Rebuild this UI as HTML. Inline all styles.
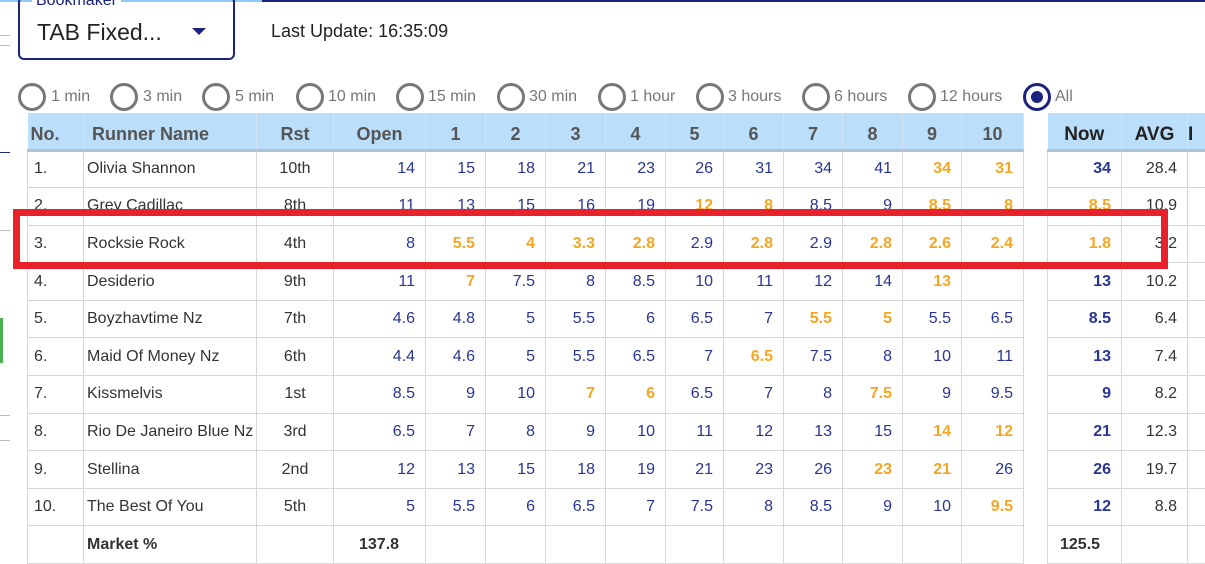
<!DOCTYPE html>
<html><head><meta charset="utf-8"><style>
*{margin:0;padding:0;box-sizing:border-box}
body{width:1205px;height:544px;overflow:hidden;background:#fff;font-family:"Liberation Sans",sans-serif;position:relative}
.topl{position:absolute;left:0;top:0;width:262px;height:2px;background:#90caf9}
.topd{position:absolute;left:262px;top:0;width:943px;height:2px;background:#1a237e}
.side{position:absolute;left:0;width:10px;height:1px;background:#bbb}
.bm{position:absolute;left:18px;top:-4px;width:217px;height:64px;border:2.5px solid #1a237e;border-radius:6px}
.bml{position:absolute;left:32px;top:-8px;background:#fff;padding:0 4px;color:#1a237e;font-size:16px}
.bmt{position:absolute;left:37px;top:19px;font-size:23px;color:#222}
.arr{position:absolute;left:192px;top:28px;width:0;height:0;border-left:7px solid transparent;border-right:7px solid transparent;border-top:7px solid #1a237e}
.lu{position:absolute;left:271px;top:21px;font-size:18px;color:#222}
.r{position:absolute;top:83px;width:28px;height:28px;border:3px solid #777;border-radius:50%}
.r.on{border-color:#1a237e}
.r.on::after{content:"";position:absolute;left:5px;top:5px;width:12px;height:12px;border-radius:50%;background:#1a237e}
.rl{position:absolute;top:88px;font-size:16px;color:#777}
table{position:absolute;border-collapse:collapse;table-layout:fixed;font-size:16px}
th{background:#bbdefb;height:37px;padding-top:8px;font-size:18px;color:#555;font-weight:bold;border-right:1px solid #d4e6f5;border-bottom:3px solid #b0c4d6;text-align:center}
td{height:37.6px;border:1px solid #d8d8d8;color:#333;padding:0 10px 0 0;text-align:right;white-space:nowrap}
td.n{text-align:left;padding-left:6px}
td.nm{text-align:left;padding-left:3px}
td.c{text-align:center;padding:0}
td.v{color:#283593}
td.o{color:#f5a623;font-weight:bold}
td.b{color:#283593;font-weight:bold}
.box{position:absolute;left:13px;top:209px;width:1155px;height:60px;border:7px solid #e8212a}
</style></head><body>
<div class="topl"></div><div class="topd"></div>
<div class="side" style="top:35px"></div><div class="side" style="top:45px"></div><div class="side" style="top:152px;background:#1a237e"></div><div class="side" style="top:230px"></div><div class="side" style="top:415px"></div><div class="side" style="top:440px"></div>
<div style="position:absolute;left:0;top:318px;width:3px;height:45px;background:#4caf50"></div>
<div class="bm"></div><div class="bml">Bookmaker</div><div class="bmt">TAB Fixed...</div><div class="arr"></div>
<div class="lu">Last Update: 16:35:09</div>

<div class="r" style="left:18px"></div><div class="rl" style="left:51px">1 min</div>
<div class="r" style="left:110px"></div><div class="rl" style="left:143px">3 min</div>
<div class="r" style="left:202px"></div><div class="rl" style="left:235px">5 min</div>
<div class="r" style="left:296px"></div><div class="rl" style="left:328px">10 min</div>
<div class="r" style="left:396px"></div><div class="rl" style="left:428px">15 min</div>
<div class="r" style="left:497px"></div><div class="rl" style="left:529px">30 min</div>
<div class="r" style="left:598px"></div><div class="rl" style="left:630px">1 hour</div>
<div class="r" style="left:696px"></div><div class="rl" style="left:728px">3 hours</div>
<div class="r" style="left:802px"></div><div class="rl" style="left:834px">6 hours</div>
<div class="r" style="left:908px"></div><div class="rl" style="left:940px">12 hours</div>
<div class="r on" style="left:1023px"></div><div class="rl" style="left:1055px">All</div>

<table style="left:27px;top:113px;width:996px">
<colgroup><col style="width:56px"><col style="width:173px"><col style="width:77px"><col style="width:92px"><col style="width:60px"><col style="width:60px"><col style="width:60px"><col style="width:60px"><col style="width:58px"><col style="width:60px"><col style="width:59px"><col style="width:60px"><col style="width:59px"><col style="width:62px"></colgroup>
<tr><th style="text-align:left;padding-left:3px">No.</th><th style="text-align:left;padding-left:8px">Runner Name</th><th>Rst</th><th>Open</th><th>1</th><th>2</th><th>3</th><th>4</th><th>5</th><th>6</th><th>7</th><th>8</th><th>9</th><th>10</th></tr>
<tr><td class="n">1.</td><td class="nm">Olivia Shannon</td><td class="c">10th</td><td class="v">14</td><td class="v">15</td><td class="v">18</td><td class="v">21</td><td class="v">23</td><td class="v">26</td><td class="v">31</td><td class="v">34</td><td class="v">41</td><td class="o">34</td><td class="o">31</td></tr>
<tr><td class="n">2.</td><td class="nm">Grey Cadillac</td><td class="c">8th</td><td class="v">11</td><td class="v">13</td><td class="v">15</td><td class="v">16</td><td class="v">19</td><td class="o">12</td><td class="o">8</td><td class="v">8.5</td><td class="v">9</td><td class="o">8.5</td><td class="o">8</td></tr>
<tr><td class="n">3.</td><td class="nm">Rocksie Rock</td><td class="c">4th</td><td class="v">8</td><td class="o">5.5</td><td class="o">4</td><td class="o">3.3</td><td class="o">2.8</td><td class="v">2.9</td><td class="o">2.8</td><td class="v">2.9</td><td class="o">2.8</td><td class="o">2.6</td><td class="o">2.4</td></tr>
<tr><td class="n">4.</td><td class="nm">Desiderio</td><td class="c">9th</td><td class="v">11</td><td class="o">7</td><td class="v">7.5</td><td class="v">8</td><td class="v">8.5</td><td class="v">10</td><td class="v">11</td><td class="v">12</td><td class="v">14</td><td class="o">13</td><td></td></tr>
<tr><td class="n">5.</td><td class="nm">Boyzhavtime Nz</td><td class="c">7th</td><td class="v">4.6</td><td class="v">4.8</td><td class="v">5</td><td class="v">5.5</td><td class="v">6</td><td class="v">6.5</td><td class="v">7</td><td class="o">5.5</td><td class="o">5</td><td class="v">5.5</td><td class="v">6.5</td></tr>
<tr><td class="n">6.</td><td class="nm">Maid Of Money Nz</td><td class="c">6th</td><td class="v">4.4</td><td class="v">4.6</td><td class="v">5</td><td class="v">5.5</td><td class="v">6.5</td><td class="v">7</td><td class="o">6.5</td><td class="v">7.5</td><td class="v">8</td><td class="v">10</td><td class="v">11</td></tr>
<tr><td class="n">7.</td><td class="nm">Kissmelvis</td><td class="c">1st</td><td class="v">8.5</td><td class="v">9</td><td class="v">10</td><td class="o">7</td><td class="o">6</td><td class="v">6.5</td><td class="v">7</td><td class="v">8</td><td class="o">7.5</td><td class="v">9</td><td class="v">9.5</td></tr>
<tr><td class="n">8.</td><td class="nm">Rio De Janeiro Blue Nz</td><td class="c">3rd</td><td class="v">6.5</td><td class="v">7</td><td class="v">8</td><td class="v">9</td><td class="v">10</td><td class="v">11</td><td class="v">12</td><td class="v">13</td><td class="v">15</td><td class="o">14</td><td class="o">12</td></tr>
<tr><td class="n">9.</td><td class="nm">Stellina</td><td class="c">2nd</td><td class="v">12</td><td class="v">13</td><td class="v">15</td><td class="v">18</td><td class="v">19</td><td class="v">21</td><td class="v">23</td><td class="v">26</td><td class="o">23</td><td class="o">21</td><td class="v">26</td></tr>
<tr><td class="n">10.</td><td class="nm">The Best Of You</td><td class="c">5th</td><td class="v">5</td><td class="v">5.5</td><td class="v">6</td><td class="v">6.5</td><td class="v">7</td><td class="v">7.5</td><td class="v">8</td><td class="v">8.5</td><td class="v">9</td><td class="v">10</td><td class="o">9.5</td></tr>
<tr><td></td><td class="nm" style="font-weight:bold;padding-left:3px">Market %</td><td></td><td style="font-weight:bold;text-align:left;padding-left:25px">137.8</td><td></td><td></td><td></td><td></td><td></td><td></td><td></td><td></td><td></td><td></td></tr>
</table>

<table style="left:1047px;top:113px;width:170px">
<colgroup><col style="width:74px"><col style="width:66px"><col style="width:30px"></colgroup>
<tr><th style="color:#222;font-size:19px">Now</th><th style="color:#222;font-size:19px">AVG</th><th style="color:#222;font-size:19px;text-align:left">I</th></tr>
<tr><td class="b">34</td><td>28.4</td><td></td></tr>
<tr><td class="o">8.5</td><td>10.9</td><td></td></tr>
<tr><td class="o">1.8</td><td>3.2</td><td></td></tr>
<tr><td class="b">13</td><td>10.2</td><td></td></tr>
<tr><td class="b">8.5</td><td>6.4</td><td></td></tr>
<tr><td class="b">13</td><td>7.4</td><td></td></tr>
<tr><td class="b">9</td><td>8.2</td><td></td></tr>
<tr><td class="b">21</td><td>12.3</td><td></td></tr>
<tr><td class="b">26</td><td>19.7</td><td></td></tr>
<tr><td class="b">12</td><td>8.8</td><td></td></tr>
<tr><td style="font-weight:bold;text-align:left;padding-left:12px">125.5</td><td></td><td></td></tr>
</table>

<div class="box"></div>
</body></html>
